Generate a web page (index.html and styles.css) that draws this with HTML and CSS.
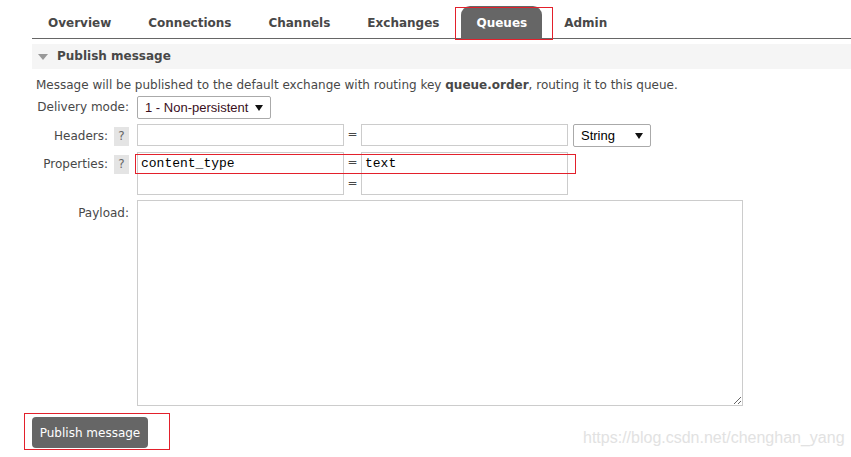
FILE: index.html
```html
<!DOCTYPE html>
<html>
<head>
<meta charset="utf-8">
<link rel="stylesheet" href="styles.css">
</head>
<body>
<div class="page">
  <ul class="tabs">
    <li class="tab">Overview</li>
    <li class="tab">Connections</li>
    <li class="tab">Channels</li>
    <li class="tab">Exchanges</li>
    <li class="tab active">Queues</li>
    <li class="tab">Admin</li>
  </ul>

  <div class="section">
    <h2 class="section-head"><span class="tri"></span>Publish message</h2>
    <p class="hint">Message will be published to the default exchange with routing key <b>queue.order</b>, routing it to this queue.</p>

    <div class="form">
      <div class="label">Delivery mode:</div>
      <div class="field">
        <div class="sel sel-mode"><select><option>1 - Non-persistent</option></select></div>
      </div>

      <div class="label label-hdr">Headers: <span class="help">?</span></div>
      <div class="field">
        <div class="kv">
          <input class="txt" type="text">
          <span class="eq">=</span>
          <input class="txt" type="text">
          <div class="sel sel-type"><select><option>String</option></select></div>
        </div>
      </div>

      <div class="label label-props">Properties: <span class="help">?</span></div>
      <div class="field">
        <div class="kv">
          <input class="txt mono" type="text" value="content_type">
          <span class="eq">=</span>
          <input class="txt mono" type="text" value="text">
        </div>
        <div class="kv kv-next">
          <input class="txt" type="text">
          <span class="eq">=</span>
          <input class="txt" type="text">
        </div>
      </div>

      <div class="label label-top">Payload:</div>
      <div class="field">
        <textarea class="payload"></textarea>
      </div>
    </div>
  </div>

  <button class="btn">Publish message</button>

  <div class="mark mark-tab"></div>
  <div class="mark mark-props"></div>
  <div class="mark mark-btn"></div>
  <div class="watermark">https://blog.csdn.net/chenghan_yang</div>
</div>
</body>
</html>
```

FILE: styles.css
```css
html, body {
  margin: 0;
  padding: 0;
  background: #fff;
}
body {
  font-family: "DejaVu Sans", Verdana, sans-serif;
  font-size: 12px;
  color: #484848;
}
.page {
  position: relative;
  width: 851px;
  height: 457px;
  padding-left: 32px;
  box-sizing: border-box;
  overflow: hidden;
}
.tabs {
  list-style: none;
  margin: 0;
  padding: 6px 0 0 1px;
  display: flex;
  border-bottom: 1px solid #666;
  height: 32px;
}
.tab {
  font-weight: bold;
  font-size: 12px;
  line-height: 30px;
  padding: 2px 15px 0;
  height: 30px;
  margin-right: 7px;
  color: #484848;
  border-radius: 9px 9px 0 0;
}
.tab.active {
  background: #666;
  color: #fff;
}
.section {
  margin-top: 5px;
}
.section-head {
  margin: 0;
  height: 25px;
  background: #f5f5f5;
  font-size: 12px;
  font-weight: bold;
  line-height: 25px;
  color: #484848;
  display: flex;
  align-items: center;
  padding-left: 6px;
}
.tri {
  width: 0;
  height: 0;
  border-left: 5px solid transparent;
  border-right: 5px solid transparent;
  border-top: 6px solid #999;
  margin-right: 9px;
  margin-top: 1px;
}
.hint {
  margin: 9px 0 3px 4px;
  line-height: 15px;
}
.hint b {
  font-weight: bold;
}
.form {
  display: grid;
  grid-template-columns: 97px 1fr;
  column-gap: 8px;
  row-gap: 5px;
}
.label {
  display: flex;
  justify-content: flex-end;
  align-items: center;
  gap: 6px;
  white-space: nowrap;
  line-height: 19px;
}
.label-hdr {
  padding-top: 2px;
}
.label-props {
  align-items: flex-start;
  padding-top: 3px;
}
.label-top {
  align-items: flex-start;
  padding-top: 4px;
}
.help {
  display: inline-block;
  width: 15px;
  height: 19px;
  line-height: 19px;
  text-align: center;
  background: #e4e4e4;
  color: #666;
  font-size: 12px;
}
.field {
  display: flex;
  flex-direction: column;
  align-items: flex-start;
}
.kv {
  display: flex;
  align-items: flex-start;
}
.kv-next {
  margin-top: -1px;
}
.txt {
  box-sizing: border-box;
  width: 207px;
  height: 22px;
  border: 1px solid #ccc;
  margin: 0;
  padding: 1px 5px;
  font-family: "Liberation Sans", Arial, sans-serif;
  font-size: 13px;
  color: #000;
  background: #fff;
  outline: none;
}
.txt.mono {
  font-family: "Liberation Mono", "Courier New", monospace;
  font-size: 13px;
  padding: 1px 3px;
}
.eq {
  width: 17px;
  text-align: center;
  line-height: 20px;
  color: #484848;
}
.sel {
  position: relative;
  display: inline-block;
}
.sel select {
  appearance: none;
  -webkit-appearance: none;
  box-sizing: border-box;
  height: 23px;
  border: 1px solid #aaa;
  border-radius: 2px;
  background: #fff;
  font-family: "Liberation Sans", Arial, sans-serif;
  font-size: 13px;
  color: #000;
  padding: 0 0 0 7px;
  margin: 0;
  display: block;
}
.sel::after {
  content: "";
  position: absolute;
  right: 8px;
  top: 9px;
  border-left: 4px solid transparent;
  border-right: 4px solid transparent;
  border-top: 6px solid #111;
  pointer-events: none;
}
.sel-mode select {
  width: 134px;
  color: #3a0f1c;
}
.sel-type {
  margin-left: 5px;
}
.sel-type select {
  width: 78px;
}
.payload {
  box-sizing: border-box;
  width: 606px;
  height: 206px;
  border: 1px solid #ccc;
  margin: 0;
  padding: 2px;
  resize: both;
  outline: none;
  display: block;
}
.btn {
  display: block;
  margin-top: 11px;
  width: 116px;
  height: 31px;
  border: 0;
  border-radius: 4px;
  background: #666;
  color: #fff;
  font-family: "DejaVu Sans", Verdana, sans-serif;
  font-size: 12px;
  padding: 0;
}
.mark {
  position: absolute;
  border: 1px solid #e3202b;
  box-sizing: border-box;
  pointer-events: none;
}
.mark-tab {
  left: 455px;
  top: 7px;
  width: 98px;
  height: 33px;
}
.mark-props {
  left: 135px;
  top: 154px;
  width: 441px;
  height: 20px;
}
.mark-btn {
  left: 24px;
  top: 413px;
  width: 146px;
  height: 37px;
}
.watermark {
  position: absolute;
  left: 583px;
  top: 429px;
  font-family: "Liberation Sans", Arial, sans-serif;
  font-size: 16px;
  color: #e2e2e2;
  white-space: nowrap;
}
```
